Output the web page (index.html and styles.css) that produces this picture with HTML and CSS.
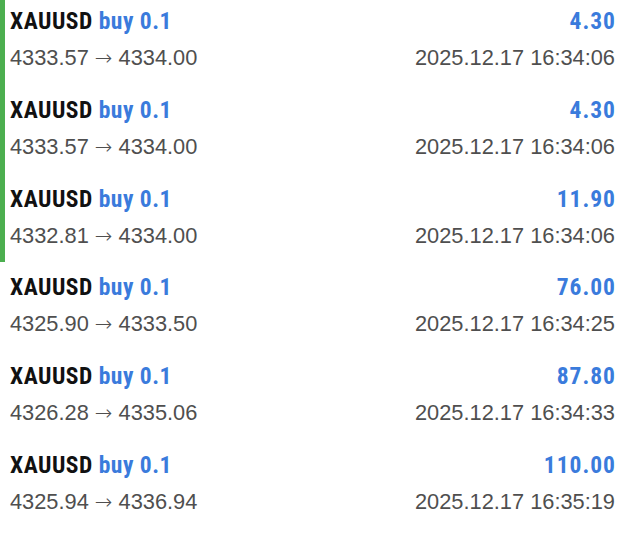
FILE: index.html
```html
<!DOCTYPE html>
<html lang="en">
<head>
  <meta charset="UTF-8">
  <title>History</title>
  <meta name="viewport" content="width=device-width, initial-scale=1.0">
  <link rel="stylesheet" href="styles.css">
</head>
<body>
  <div class="group open">
    <div class="trade">
      <div class="line">
        <div class="title">XAUUSD <span class="side">buy 0.1</span></div>
        <div class="profit">4.30</div>
      </div>
      <div class="line sub">
        <div>4333.57 <span class="arrow">→</span> 4334.00</div>
        <div>2025.12.17 16:34:06</div>
      </div>
    </div>
    <div class="trade">
      <div class="line">
        <div class="title">XAUUSD <span class="side">buy 0.1</span></div>
        <div class="profit">4.30</div>
      </div>
      <div class="line sub">
        <div>4333.57 <span class="arrow">→</span> 4334.00</div>
        <div>2025.12.17 16:34:06</div>
      </div>
    </div>
    <div class="trade">
      <div class="line">
        <div class="title">XAUUSD <span class="side">buy 0.1</span></div>
        <div class="profit">11.90</div>
      </div>
      <div class="line sub">
        <div>4332.81 <span class="arrow">→</span> 4334.00</div>
        <div>2025.12.17 16:34:06</div>
      </div>
    </div>
  </div>
  <div class="group">
    <div class="trade">
      <div class="line">
        <div class="title">XAUUSD <span class="side">buy 0.1</span></div>
        <div class="profit">76.00</div>
      </div>
      <div class="line sub">
        <div>4325.90 <span class="arrow">→</span> 4333.50</div>
        <div>2025.12.17 16:34:25</div>
      </div>
    </div>
    <div class="trade">
      <div class="line">
        <div class="title">XAUUSD <span class="side">buy 0.1</span></div>
        <div class="profit">87.80</div>
      </div>
      <div class="line sub">
        <div>4326.28 <span class="arrow">→</span> 4335.06</div>
        <div>2025.12.17 16:34:33</div>
      </div>
    </div>
    <div class="trade">
      <div class="line">
        <div class="title">XAUUSD <span class="side">buy 0.1</span></div>
        <div class="profit">110.00</div>
      </div>
      <div class="line sub">
        <div>4325.94 <span class="arrow">→</span> 4336.94</div>
        <div>2025.12.17 16:35:19</div>
      </div>
    </div>
  </div>
</body>
</html>
```

FILE: styles.css
```css
body {
  margin: 0;
  background: #fff;
  font-family: "Liberation Sans", Arial, sans-serif;
  color: #111;
}
.group {
  border-left: 5px solid transparent;
}
.group.open {
  border-left-color: #4caf4f;
}
.trade {
  padding: 6px 10px 11px 5px;
  margin-bottom: 4.8px;
}
.line {
  display: flex;
  justify-content: space-between;
  align-items: center;
  height: 30px;
}
.title, .profit {
  font-family: Roboto, "DejaVu Sans Condensed", sans-serif;
  font-stretch: condensed;
  font-weight: 700;
  font-size: 23.5px;
  line-height: 30px;
  letter-spacing: 0.5px;
}
.profit {
  letter-spacing: 1px;
  margin-right: -1px;
}
.side, .profit {
  color: #3a7bdc;
}
.sub {
  margin-top: 7px;
  font-size: 21.8px;
  line-height: 30px;
  color: #4f4f4f;
}
.arrow {
  font-family: "DejaVu Sans", sans-serif;
  font-size: 21px;
  font-weight: 200;
}
```
